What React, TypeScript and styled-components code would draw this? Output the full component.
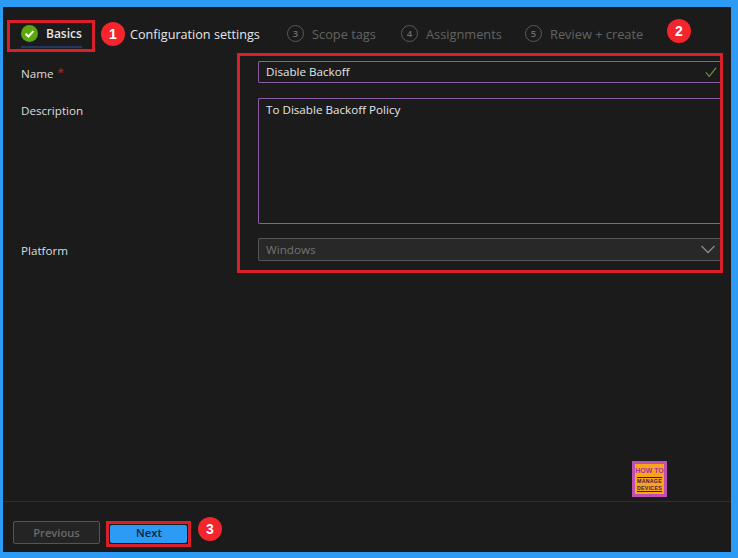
import * as React from "react";
import styled, { createGlobalStyle } from "styled-components";

const GlobalStyle = createGlobalStyle`
  html, body {
    margin: 0;
    padding: 0;
    background: #2b9bf5;
  }
  body {
    font-family: "Open Sans", "Noto Sans", sans-serif;
    font-size: 11.65px;
  }
`;

const Frame = styled.div`
  width: 738px;
  height: 558px;
  box-sizing: border-box;
  padding: 7px 7px 6px 3px;
  background: #2b9bf5;
  overflow: hidden;
`;

const Panel = styled.div`
  position: relative;
  height: 100%;
  display: flex;
  flex-direction: column;
  background: #1b1b1b;
  color: #e4e4e4;
`;

const Tabs = styled.div`
  display: flex;
  align-items: center;
  height: 54px;
  padding: 0 0 0 18px;
  box-sizing: border-box;
  flex: none;
`;

const Tab = styled.div<{ $gap: number; $width: number; $dim?: boolean; $bold?: boolean }>`
  display: flex;
  align-items: center;
  gap: ${p => p.$gap}px;
  width: ${p => p.$width}px;
  flex: none;
  white-space: nowrap;
  margin-top: -1px;
  color: ${p => (p.$dim ? "#636363" : "#e6e6e6")};
  font-weight: ${p => (p.$bold ? 600 : 400)};
  font-size: ${p => (p.$bold ? 12 : p.$dim ? 12.8 : 12.65)}px;
`;

const ActiveTab = styled(Tab)`
  position: relative;
  &::after {
    content: "";
    position: absolute;
    left: 0;
    width: 61px;
    top: 21px;
    height: 2px;
    background: #24375f;
  }
`;

const StepCircle = styled.span`
  width: 15px;
  height: 15px;
  border: 1px solid #5a5a5a;
  border-radius: 50%;
  display: flex;
  align-items: center;
  justify-content: center;
  font-size: 9.5px;
  font-weight: 600;
  color: #6e6e6e;
  flex: none;
`;

const Form = styled.div`
  display: flex;
  flex-direction: column;
  gap: 14px;
  padding: 0 11px 0 18px;
  flex: none;
`;

const FormRow = styled.div<{ $top?: number }>`
  display: grid;
  grid-template-columns: 237px 1fr;
  align-items: start;
  margin-top: ${p => p.$top ?? 0}px;
`;

const Label = styled.div`
  line-height: 18px;
  padding-top: 4px;
  color: #dedede;
`;

const Required = styled.span`
  color: #b92a32;
  margin-left: 4px;
  line-height: 0;
  vertical-align: 2px;
`;

const Field = styled.div<{ $height: number; $disabled?: boolean; $multiline?: boolean }>`
  position: relative;
  height: ${p => p.$height}px;
  box-sizing: border-box;
  border: 1px solid ${p => (p.$disabled ? "#555" : "#8d5aa5")};
  border-right: none;
  border-radius: 2px 0 0 2px;
  background: ${p => (p.$disabled ? "#282828" : "#1b1b1b")};
  color: ${p => (p.$disabled ? "#747474" : "#e6e6e6")};
  padding: 0 7px;
  line-height: ${p => (p.$multiline ? 22 : p.$height - 2)}px;
`;

const FieldIcon = styled.svg<{ $color: string; $right: number; $top: number; $size: number }>`
  position: absolute;
  right: ${p => p.$right}px;
  top: ${p => p.$top}px;
  width: ${p => p.$size}px;
  height: ${p => p.$size}px;
  fill: none;
  stroke: ${p => p.$color};
  stroke-width: 1.3;
`;

const Spacer = styled.div`
  flex: 1;
`;

const Footer = styled.div`
  flex: none;
  height: 51px;
  box-sizing: border-box;
  border-top: 1px solid #2f2f2f;
  padding: 19px 0 0 10px;
  display: flex;
  align-items: flex-start;
  gap: 10px;
`;

const Button = styled.div<{ $primary?: boolean }>`
  box-sizing: border-box;
  height: ${p => (p.$primary ? 18 : 23)}px;
  width: ${p => (p.$primary ? 77 : 87)}px;
  margin-top: ${p => (p.$primary ? 4 : 0)}px;
  padding: 0 0 ${p => (p.$primary ? 3 : 0)}px ${p => (p.$primary ? 1 : 0)}px;
  background: ${p => (p.$primary ? "#2b9bf5" : "#242424")};
  border: ${p => (p.$primary ? "none" : "1px solid #555")};
  border-radius: 2px;
  color: ${p => (p.$primary ? "#10243c" : "#6a6a6a")};
  font-size: 11.2px;
  font-weight: 600;
  display: flex;
  align-items: center;
  justify-content: center;
`;

const Logo = styled.div`
  position: absolute;
  left: 629px;
  top: 454px;
  width: 35px;
  height: 36px;
  box-sizing: border-box;
  border: 3px solid #bf4fb3;
  background: #f6a51c;
  font-family: "Liberation Sans", sans-serif;
  font-weight: 700;
  display: flex;
  flex-direction: column;
  align-items: center;
  padding-top: 2px;
  overflow: hidden;
`;

const LogoTop = styled.div`
  font-size: 7px;
  line-height: 9px;
  margin-bottom: 2px;
  color: #b02ca8;
  white-space: nowrap;
`;

const LogoBottom = styled.div`
  font-size: 5.2px;
  line-height: 6.5px;
  letter-spacing: 0.3px;
  color: #3a1650;
  border-top: 1px solid #3a1650;
  border-bottom: 1px solid #3a1650;
  text-align: center;
  white-space: nowrap;
`;

const RedBox = styled.div<{ $x: number; $y: number; $w: number; $h: number }>`
  position: absolute;
  left: ${p => p.$x}px;
  top: ${p => p.$y}px;
  width: ${p => p.$w}px;
  height: ${p => p.$h}px;
  box-sizing: border-box;
  border: 3px solid #d81f2a;
  pointer-events: none;
`;

const Badge = styled.div<{ $x: number; $y: number }>`
  position: absolute;
  left: ${p => p.$x - 12}px;
  top: ${p => p.$y - 12}px;
  width: 24px;
  height: 24px;
  border-radius: 50%;
  background: #f4252c;
  color: #fff;
  font-family: "Liberation Sans", sans-serif;
  font-weight: 700;
  font-size: 14px;
  display: flex;
  align-items: center;
  justify-content: center;
`;

const steps = [
  { n: 3, label: "Scope tags", width: 114 },
  { n: 4, label: "Assignments", width: 124 },
  { n: 5, label: "Review + create", width: 120 },
];

export default function App() {
  return (
    <Frame>
      <GlobalStyle />
      <Panel>
        <Tabs>
          <ActiveTab $gap={8} $width={109} $bold>
            <svg width="17" height="17" viewBox="0 0 17 17">
              <circle cx="8.5" cy="8.5" r="8.5" fill="#5aa70f" />
              <path d="M4.6 8.8l2.8 2.7 5-5.4" fill="none" stroke="#fff" strokeWidth="2" />
            </svg>
            Basics
          </ActiveTab>
          <Tab $gap={0} $width={157}>Configuration settings</Tab>
          {steps.map(s => (
            <Tab key={s.n} $gap={8} $width={s.width} $dim>
              <StepCircle>{s.n}</StepCircle>
              {s.label}
            </Tab>
          ))}
        </Tabs>

        <Form>
          <FormRow>
            <Label>Name<Required>*</Required></Label>
            <Field $height={22}>
              Disable Backoff
              <FieldIcon $color="#6f9a3c" $right={3} $top={4} $size={12} viewBox="0 0 14 14">
                <path d="M1 7.5l4 4.5L13 2" />
              </FieldIcon>
            </Field>
          </FormRow>
          <FormRow $top={1}>
            <Label>Description</Label>
            <Field $height={126} $multiline>To Disable Backoff Policy</Field>
          </FormRow>
          <FormRow>
            <Label>Platform</Label>
            <Field $height={23} $disabled>
              Windows
              <FieldIcon $color="#8a8a8a" $right={5} $top={3} $size={14} viewBox="0 0 14 14">
                <path d="M0.5 4l6.5 6.5L13.5 4" />
              </FieldIcon>
            </Field>
          </FormRow>
        </Form>

        <Spacer />

        <Footer>
          <Button>Previous</Button>
          <Button $primary>Next</Button>
        </Footer>

        <Logo>
          <LogoTop>HOW TO</LogoTop>
          <LogoBottom>MANAGE<br />DEVICES</LogoBottom>
        </Logo>

        <RedBox $x={4} $y={13} $w={88} $h={32} />
        <RedBox $x={234} $y={46} $w={486} $h={220} />
        <RedBox $x={103} $y={514} $w={85} $h={26} />
        <Badge $x={110} $y={27}>1</Badge>
        <Badge $x={676} $y={24}>2</Badge>
        <Badge $x={207} $y={522}>3</Badge>
      </Panel>
    </Frame>
  );
}
